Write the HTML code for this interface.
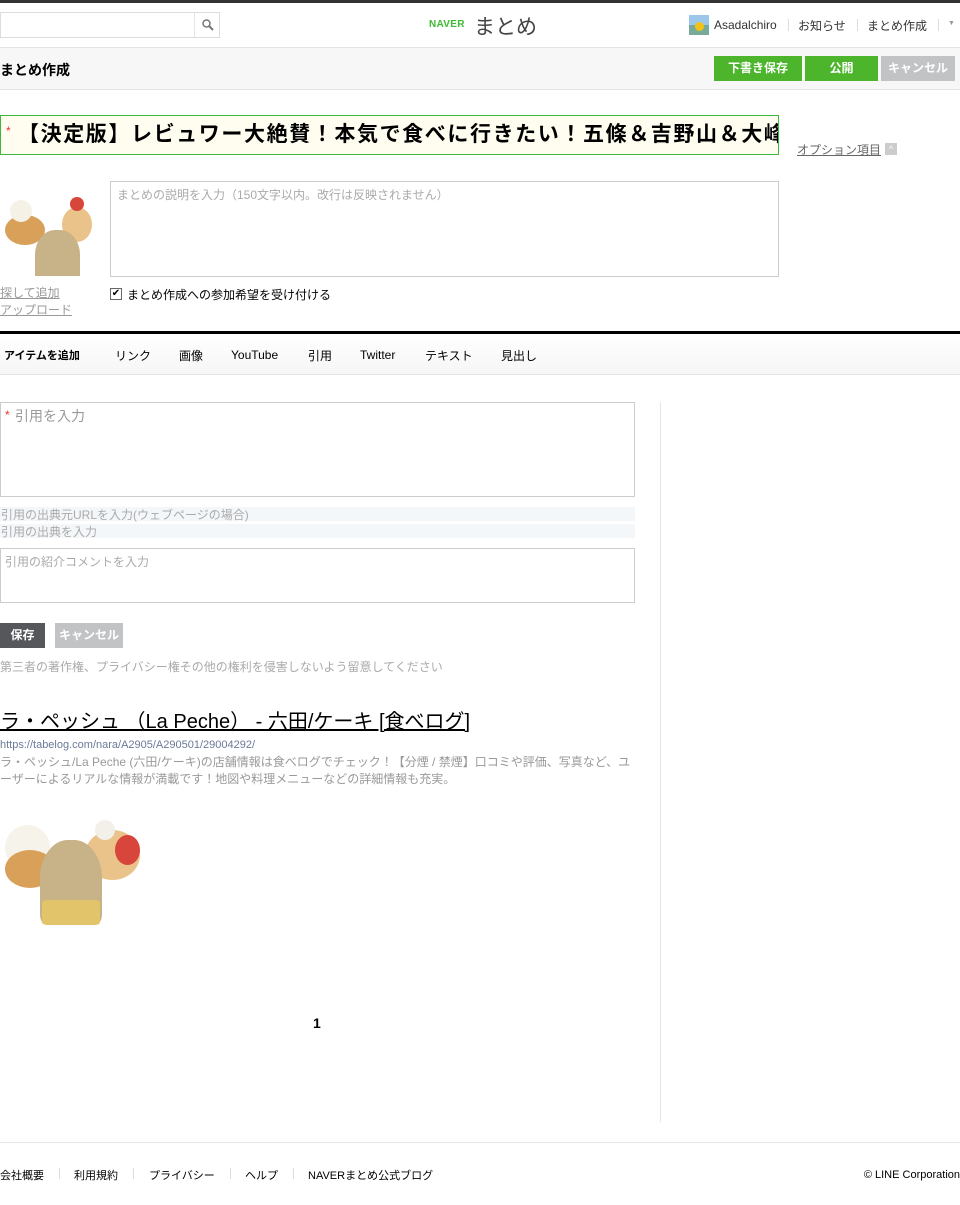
<!DOCTYPE html>
<html><head><meta charset="utf-8"><style>
*{margin:0;padding:0;box-sizing:border-box}
body{width:960px;height:1205px;position:relative;background:#fff;font-family:"Liberation Sans","Noto Sans CJK JP",sans-serif;color:#000;overflow:hidden}
.a{position:absolute;white-space:nowrap}
.btn{position:absolute;color:#fff;font-size:12px;font-weight:bold;text-align:center;line-height:25px}
.cake{position:absolute;overflow:hidden;background:#fff}
.cake i{position:absolute;border-radius:50%}
</style></head><body>
<div class="a" style="left:0;top:0;width:960px;height:3px;background:#333"></div>
<div class="a" style="left:0;top:12px;width:220px;height:26px;border:1px solid #ddd"></div>
<div class="a" style="left:194px;top:13px;width:1px;height:24px;background:#e5e5e5"></div>
<svg class="a" style="left:201px;top:18px" width="14" height="14" viewBox="0 0 14 14"><circle cx="5.5" cy="5.5" r="3.5" fill="none" stroke="#777" stroke-width="1.5"/><path d="M8 8l4 4" stroke="#777" stroke-width="2"/></svg>
<div class="a" style="left:429px;top:19px;font-size:10px;font-weight:bold;color:#3fb832;letter-spacing:.3px">NAVER</div>
<div class="a" style="left:474px;top:11px;font-size:21px;color:#444">まとめ</div>
<div class="a" style="left:689px;top:15px;width:20px;height:20px;background:linear-gradient(#9cc6ea 50%,#7a9 50%)"><div style="position:absolute;left:6px;top:7px;width:9px;height:9px;border-radius:50%;background:#f3c214"></div></div>
<div class="a" style="left:714px;top:17px;font-size:12px;color:#333;line-height:16px">Asadalchiro</div>
<div class="a" style="left:788px;top:19px;width:1px;height:12px;background:#ddd"></div>
<div class="a" style="left:798px;top:17px;font-size:12px;color:#333">お知らせ</div>
<div class="a" style="left:857px;top:19px;width:1px;height:12px;background:#ddd"></div>
<div class="a" style="left:867px;top:17px;font-size:12px;color:#333">まとめ作成</div>
<div class="a" style="left:938px;top:19px;width:1px;height:12px;background:#ddd"></div>
<div class="a" style="left:948px;top:20px;font-size:7px;color:#999">▼</div>
<div class="a" style="left:0;top:47px;width:960px;height:43px;background:#f7f7f7;border-top:1px solid #e3e3e3;border-bottom:1px solid #e3e3e3"></div>
<div class="a" style="left:0;top:60px;font-size:14px;font-weight:bold">まとめ作成</div>
<div class="btn" style="left:714px;top:56px;width:88px;background:#4cb52c">下書き保存</div>
<div class="btn" style="left:805px;top:56px;width:73px;background:#4cb52c">公開</div>
<div class="btn" style="left:881px;top:56px;width:74px;background:#c1c3c5">キャンセル</div>
<div class="a" style="left:0;top:115px;width:779px;height:40px;border:1px solid #3cb83c;background:#fffdf0;overflow:hidden">
<span style="position:absolute;left:5px;top:8px;color:#e33;font-size:12px">*</span>
<span style="position:absolute;left:17px;top:5px;font-size:21px;font-weight:bold;letter-spacing:1.6px;line-height:28px">【決定版】レビュワー大絶賛！本気で食べに行きたい！五條＆吉野山＆大峰</span></div>
<div class="a" style="left:797px;top:141px;font-size:12px;color:#666;text-decoration:underline">オプション項目</div>
<div class="a" style="left:885px;top:143px;width:12px;height:12px;background:#ccc;color:#fff;font-size:9px;text-align:center;line-height:12px">^</div>
<div class="cake" style="left:0;top:185px;width:95px;height:91px">
<i style="left:5px;top:30px;width:40px;height:30px;background:#d9a05a"></i>
<i style="left:10px;top:15px;width:22px;height:22px;background:#f6f1e6"></i>
<i style="left:62px;top:22px;width:30px;height:35px;background:#e9c38a"></i>
<i style="left:70px;top:12px;width:14px;height:14px;background:#d8453a"></i>
<i style="left:35px;top:45px;width:45px;height:55px;background:#c8b389;border-radius:45% 45% 10% 10%"></i>
</div>
<div class="a" style="left:110px;top:181px;width:669px;height:96px;border:1px solid #ccc"></div>
<div class="a" style="left:117px;top:186px;font-size:12px;color:#aaa">まとめの説明を入力（150文字以内。改行は反映されません）</div>
<div class="a" style="left:0;top:284px;font-size:12px;color:#999;text-decoration:underline">探して追加</div>
<div class="a" style="left:0;top:301px;font-size:12px;color:#999;text-decoration:underline">アップロード</div>
<div class="a" style="left:110px;top:288px;width:12px;height:12px;border:1px solid #666;font-size:10px;line-height:10px;text-align:center">✔</div>
<div class="a" style="left:127px;top:286px;font-size:12px">まとめ作成への参加希望を受け付ける</div>
<div class="a" style="left:0;top:331px;width:960px;height:3px;background:#000"></div>
<div class="a" style="left:0;top:334px;width:960px;height:41px;background:linear-gradient(#fff,#f6f6f6);border-bottom:1px solid #e3e3e3"></div>
<div class="a" style="left:4px;top:347px;font-size:11px;font-weight:bold">アイテムを追加</div>
<div class="a" style="left:115px;top:347px;font-size:12px">リンク</div>
<div class="a" style="left:179px;top:347px;font-size:12px">画像</div>
<div class="a" style="left:231px;top:347px;font-size:12px;line-height:16px">YouTube</div>
<div class="a" style="left:308px;top:347px;font-size:12px">引用</div>
<div class="a" style="left:360px;top:347px;font-size:12px;line-height:16px">Twitter</div>
<div class="a" style="left:425px;top:347px;font-size:12px">テキスト</div>
<div class="a" style="left:501px;top:347px;font-size:12px">見出し</div>
<div class="a" style="left:660px;top:402px;width:1px;height:720px;background:#e5e5e5"></div>
<div class="a" style="left:0;top:402px;width:635px;height:95px;border:1px solid #ccc"></div>
<div class="a" style="left:5px;top:408px;font-size:12px;color:#e33">*</div>
<div class="a" style="left:15px;top:406px;font-size:14px;color:#999">引用を入力</div>
<div class="a" style="left:0;top:507px;width:635px;height:14px;background:#f4f7fa"></div>
<div class="a" style="left:1px;top:506px;font-size:12px;color:#aaa">引用の出典元URLを入力(ウェブページの場合)</div>
<div class="a" style="left:0;top:524px;width:635px;height:14px;background:#f4f7fa"></div>
<div class="a" style="left:1px;top:523px;font-size:12px;color:#aaa">引用の出典を入力</div>
<div class="a" style="left:0;top:548px;width:635px;height:55px;border:1px solid #ccc"></div>
<div class="a" style="left:5px;top:553px;font-size:12px;color:#aaa">引用の紹介コメントを入力</div>
<div class="btn" style="left:0;top:623px;width:45px;background:#55575a">保存</div>
<div class="btn" style="left:55px;top:623px;width:68px;background:#c1c3c5">キャンセル</div>
<div class="a" style="left:0;top:658px;font-size:12px;color:#aaa">第三者の著作権、プライバシー権その他の権利を侵害しないよう留意してください</div>
<div class="a" style="left:0;top:705px;font-size:20px;text-decoration:underline">ラ・ペッシュ （La Peche） - 六田/ケーキ [食べログ]</div>
<div class="a" style="left:0;top:738px;font-size:11px;color:#6b7a99;line-height:14px">https://tabelog.com/nara/A2905/A290501/29004292/</div>
<div class="a" style="left:0;top:754px;font-size:12px;color:#999;line-height:17px;white-space:normal;width:635px">ラ・ペッシュ/La Peche (六田/ケーキ)の店舗情報は食べログでチェック！【分煙 / 禁煙】口コミや評価、写真など、ユーザーによるリアルな情報が満載です！地図や料理メニューなどの詳細情報も充実。</div>
<div class="cake" style="left:0;top:800px;width:150px;height:130px">
<i style="left:5px;top:25px;width:45px;height:45px;background:#f6f3ea"></i>
<i style="left:5px;top:50px;width:50px;height:38px;background:#d9a05a"></i>
<i style="left:85px;top:30px;width:55px;height:50px;background:#e9c38a"></i>
<i style="left:95px;top:20px;width:20px;height:20px;background:#f3f0ea"></i>
<i style="left:115px;top:35px;width:25px;height:30px;background:#d8453a"></i>
<i style="left:40px;top:40px;width:62px;height:85px;background:#c8b389;border-radius:45% 45% 12% 12%"></i>
<i style="left:42px;top:100px;width:58px;height:25px;background:#e2c46a;border-radius:10%"></i>
</div>
<div class="a" style="left:313px;top:1015px;font-size:14px;font-weight:bold">1</div>
<div class="a" style="left:0;top:1142px;width:960px;height:1px;background:#e5e5e5"></div>
<div class="a" style="left:0;top:1167px;font-size:11px">会社概要</div>
<div class="a" style="left:59px;top:1168px;width:1px;height:11px;background:#ddd"></div>
<div class="a" style="left:74px;top:1167px;font-size:11px">利用規約</div>
<div class="a" style="left:133px;top:1168px;width:1px;height:11px;background:#ddd"></div>
<div class="a" style="left:149px;top:1167px;font-size:11px">プライバシー</div>
<div class="a" style="left:230px;top:1168px;width:1px;height:11px;background:#ddd"></div>
<div class="a" style="left:245px;top:1167px;font-size:11px">ヘルプ</div>
<div class="a" style="left:293px;top:1168px;width:1px;height:11px;background:#ddd"></div>
<div class="a" style="left:308px;top:1167px;font-size:11px">NAVERまとめ公式ブログ</div>
<div class="a" style="right:0;top:1168px;font-size:11px;line-height:14px">© LINE Corporation</div>
</body></html>
